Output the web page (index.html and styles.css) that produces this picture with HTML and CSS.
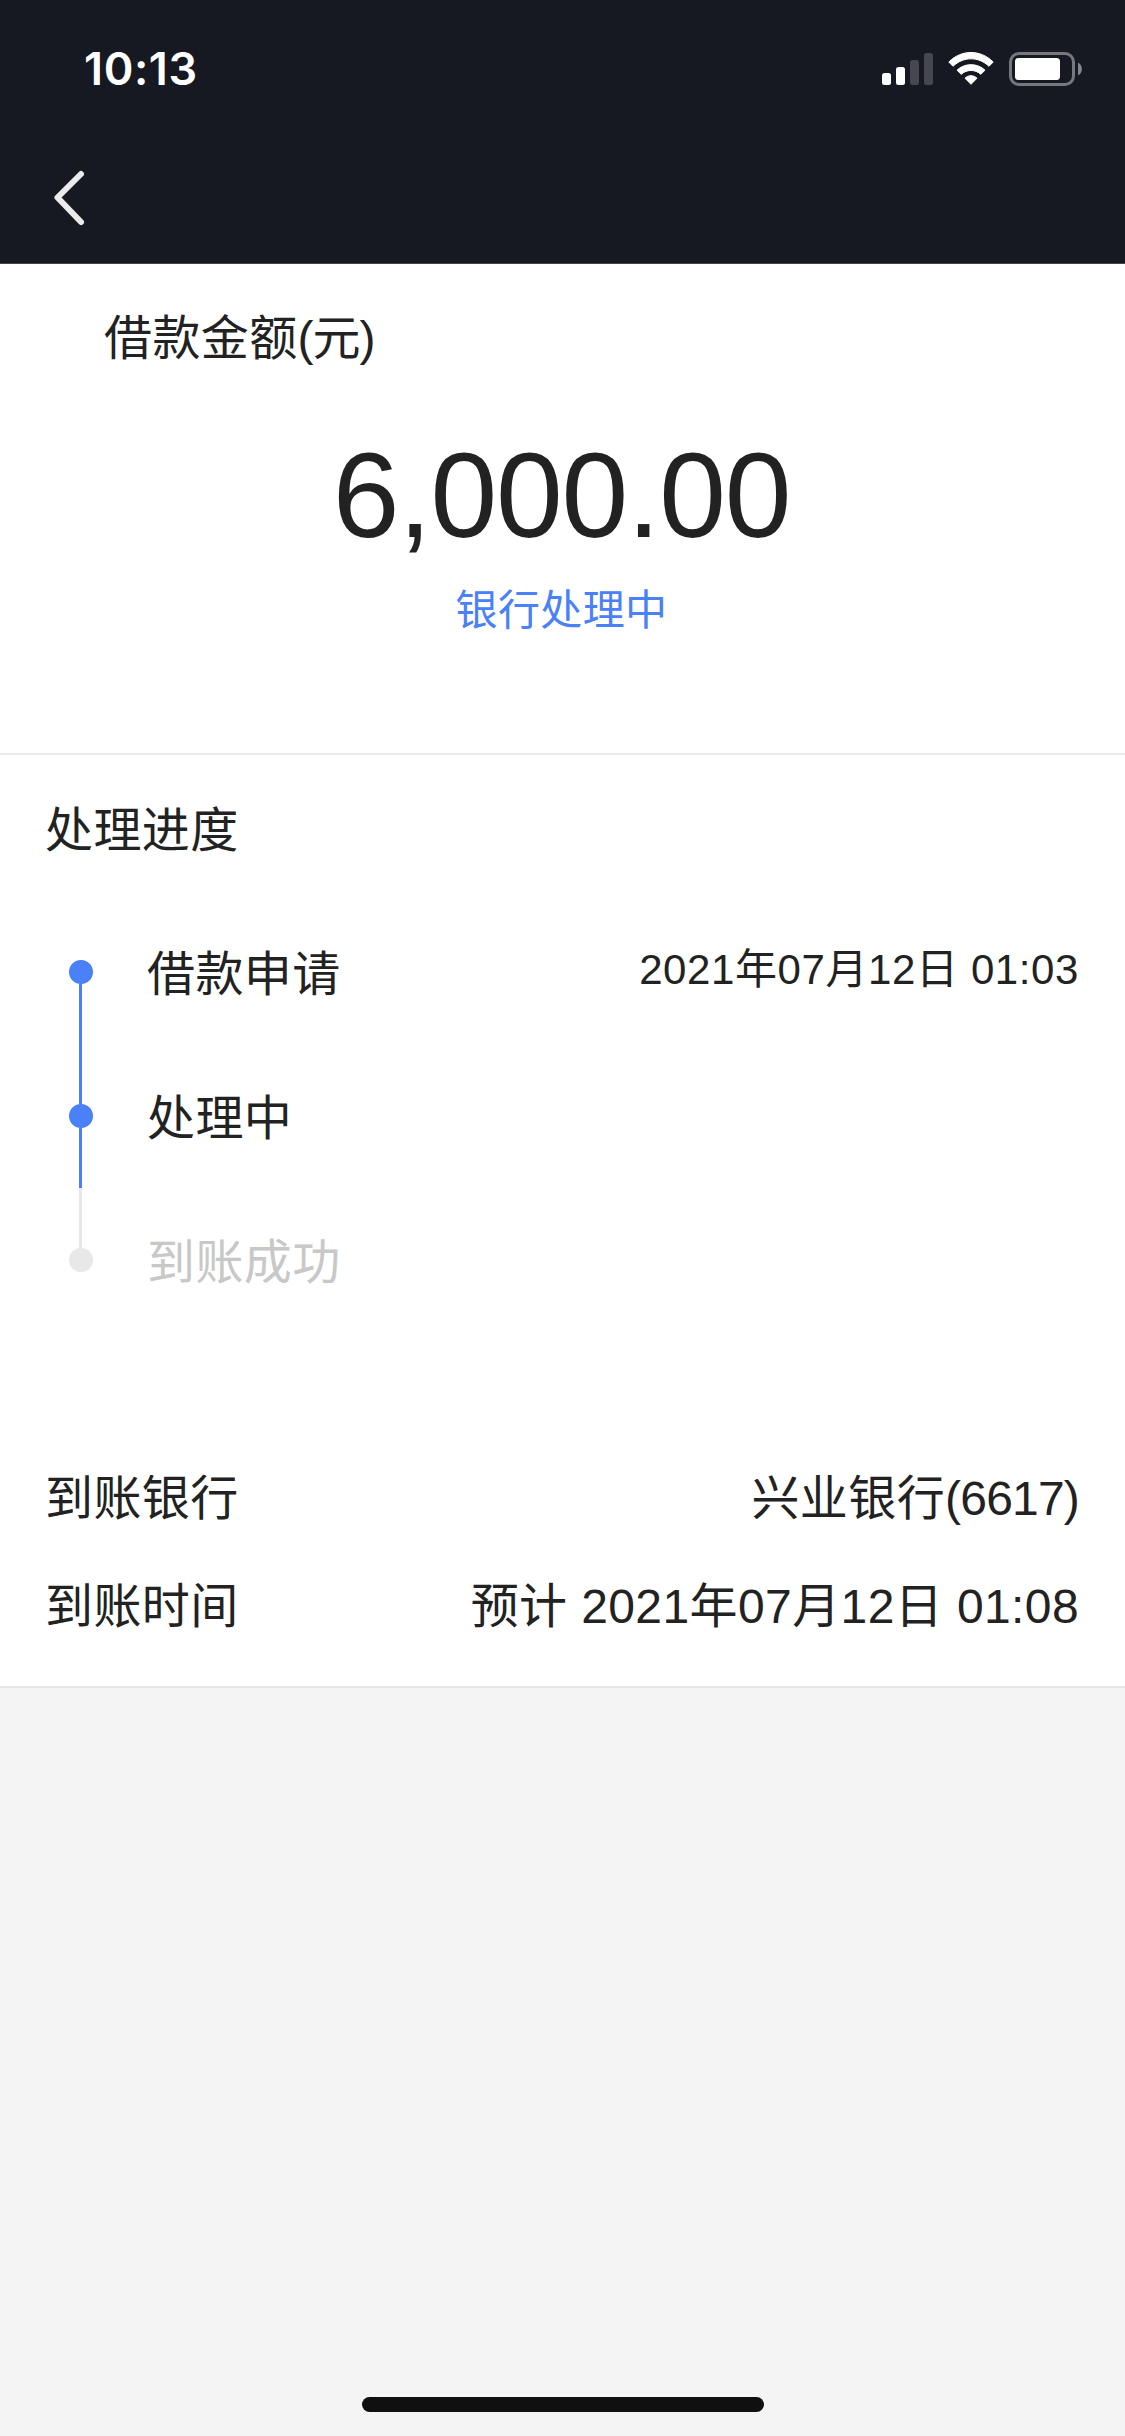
FILE: index.html
```html
<!DOCTYPE html>
<html lang="zh-CN">
<head>
<meta charset="utf-8">
<title>借款详情</title>
<link rel="stylesheet" href="styles.css">
</head>
<body>
<header class="header">
  <div class="status-bar">
    <span class="clock">10:13</span>
    <svg class="status-icons" width="202" height="36" viewBox="881 51 202 36">
      <rect x="882" y="73" width="9" height="12" rx="2.5" fill="#fff"/>
      <rect x="896" y="67" width="9" height="18" rx="2.5" fill="#fff"/>
      <rect x="910" y="60" width="9" height="25" rx="2.5" fill="#46474f"/>
      <rect x="924" y="53" width="9" height="32" rx="2.5" fill="#46474f"/>
      <g fill="#fff" stroke="#fff" stroke-width="1" stroke-linejoin="round">
        <path d="M948.8 62C961.5 49.300 980.500 49.300 993.200 62L989 66.300C978.500 56.300 963.500 56.300 953 66.300Z"/>
        <path d="M957 70.200C964.500 62.800 977.500 62.800 985 70.200L980.800 74.300C975.200 69.200 966.800 69.200 961.200 74.300Z"/>
        <path d="M965 78.200C968.500 74.800 973.500 74.800 977 78.200L971 84.300Z"/>
      </g>
      <rect x="1010.500" y="53.500" width="63" height="31" rx="8.500" fill="none" stroke="#77787e" stroke-width="3"/>
      <rect x="1015" y="58" width="45" height="22" rx="3.500" fill="#fff"/>
      <path d="M1078 62.500C1083.200 65 1083.200 73 1078 75.500Z" fill="#85868b"/>
    </svg>
  </div>
  <nav class="nav-bar">
    <svg class="back" width="36" height="60" viewBox="51 168 36 60">
      <path d="M81 174L57.500 197.500L81 222" fill="none" stroke="#ebebeb" stroke-width="6" stroke-linecap="round" stroke-linejoin="round"/>
    </svg>
  </nav>
</header>
<main class="page">
  <section class="summary">
    <h1 class="summary-title">借款金额<span class="unit">(元)</span></h1>
    <div class="amount">6,000.00</div>
    <div class="state">银行处理中</div>
  </section>
  <section class="details">
    <h2 class="section-title">处理进度</h2>
    <ol class="steps">
      <li class="step done">
        <span class="marker"></span>
        <span class="step-name">借款申请</span>
        <time class="step-time">2021年07月12日 01:03</time>
      </li>
      <li class="step current">
        <span class="marker"></span>
        <span class="step-name">处理中</span>
      </li>
      <li class="step pending">
        <span class="marker"></span>
        <span class="step-name">到账成功</span>
      </li>
    </ol>
    <dl class="info">
      <div class="info-row"><dt>到账银行</dt><dd>兴业银行<span class="card-tail">(6617)</span></dd></div>
      <div class="info-row"><dt>到账时间</dt><dd>预计 2021年07月12日 01:08</dd></div>
    </dl>
  </section>
</main>
<footer class="home-area"><div class="home-indicator"></div></footer>
</body>
</html>
```
FILE: styles.css
```css
* {
  box-sizing: border-box;
  margin: 0;
  padding: 0;
}

body {
  display: flex;
  flex-direction: column;
  width: 1125px;
  height: 2436px;
  background: #f4f4f4;
  color: #222;
  font-family: "Liberation Sans", "Noto Sans CJK SC", sans-serif;
  font-size: 48px;
  letter-spacing: 0.4px;
}

.header {
  height: 264px;
  background: #171922;
  border-bottom: 1px solid #45464d;
}

.status-bar {
  display: flex;
  justify-content: space-between;
  align-items: center;
  height: 138px;
  padding: 0 42px 0 84px;
}

.clock {
  color: #fff;
  font-family: Inter, sans-serif;
  font-size: 45px;
  font-weight: 600;
  letter-spacing: 0.6px;
  line-height: 54px;
}

.nav-bar {
  display: flex;
  align-items: center;
  height: 120px;
  padding-left: 51px;
}

.page {
  background: #fff;
}

.summary {
  height: 491px;
  padding-top: 39px;
  border-bottom: 2px solid #e9e9e9;
}

.summary-title {
  padding-left: 104px;
  font-size: 48px;
  font-weight: 400;
  line-height: 72px;
}

.unit {
  letter-spacing: -1px;
}

.amount {
  margin-top: 48px;
  padding-right: 2px;
  font-size: 120px;
  letter-spacing: -1.2px;
  line-height: 144px;
  text-align: center;
}

.state {
  margin-top: 12px;
  padding-right: 2px;
  color: #4a80f8;
  font-size: 42px;
  line-height: 64px;
  text-align: center;
}

.details {
  height: 933px;
  padding: 40px 46px 0 45px;
  border-bottom: 2px solid #e6e6e6;
}

.section-title {
  font-size: 48px;
  font-weight: 400;
  line-height: 72px;
}

.steps {
  margin-top: 33px;
  list-style: none;
}

.step {
  display: grid;
  grid-template-columns: 72px 1fr auto;
  column-gap: 30px;
  align-items: center;
  height: 144px;
}

.marker {
  display: grid;
  grid-template-rows: 60px 24px 60px;
  justify-items: center;
  height: 144px;
  background: radial-gradient(circle at 36px 72px, currentColor 11.5px, transparent 12.5px);
}

.marker::before,
.marker::after {
  content: "";
  width: 3px;
  height: 60px;
  margin-left: -1px;
}

.marker::before {
  grid-row: 1;
}

.marker::after {
  grid-row: 3;
}

.done .marker,
.current .marker {
  color: #4a80f8;
}

.pending .marker {
  color: #e8e8e8;
}

.done .marker::after,
.current .marker::before,
.current .marker::after,
.pending .marker::before {
  background: currentColor;
}

.step-name {
  padding-top: 6px;
  line-height: 72px;
}

.step-time {
  margin-top: -4px;
  font-size: 42px;
  letter-spacing: 0.6px;
  line-height: 64px;
}

.pending .step-name {
  color: #c8c8c8;
}

.info {
  margin-top: 108px;
}

.info-row {
  display: flex;
  justify-content: space-between;
  align-items: center;
  height: 108px;
}

.card-tail {
  letter-spacing: -0.8px;
}

.home-area {
  display: flex;
  justify-content: center;
  margin-top: auto;
  padding-bottom: 24px;
}

.home-indicator {
  width: 402px;
  height: 15px;
  border-radius: 8px;
  background: #101010;
}
```
